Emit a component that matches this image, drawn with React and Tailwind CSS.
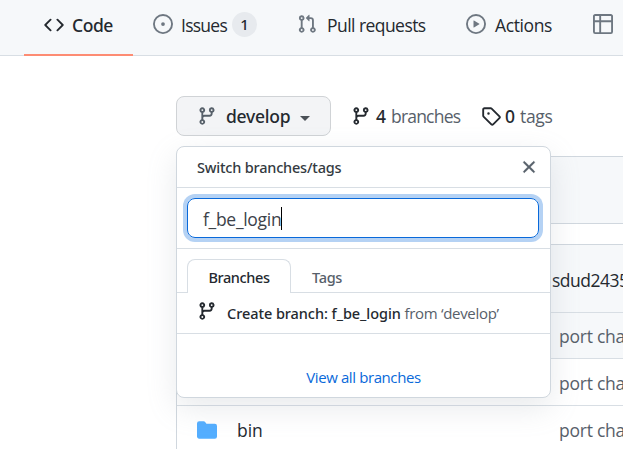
import React from "react";

const ICONS = {
  branch:
    "M11.75 2.5a.75.75 0 100 1.5.75.75 0 000-1.5zm-2.25.75a2.25 2.25 0 113 2.122V6A2.5 2.5 0 0110 8.5H6a1 1 0 00-1 1v1.128a2.251 2.251 0 11-1.5 0V5.372a2.25 2.25 0 111.5 0v1.836A2.492 2.492 0 016 7h4a1 1 0 001-1v-.628A2.25 2.25 0 019.5 3.25zM4.25 12a.75.75 0 100 1.5.75.75 0 000-1.5zM3.5 3.25a.75.75 0 111.5 0 .75.75 0 01-1.5 0z",
  code: "M4.72 3.22a.75.75 0 011.06 1.06L2.06 8l3.72 3.72a.75.75 0 11-1.06 1.06L.47 8.53a.75.75 0 010-1.06l4.25-4.25zm6.56 0a.75.75 0 10-1.06 1.06L13.94 8l-3.72 3.72a.75.75 0 101.06 1.06l4.25-4.25a.75.75 0 000-1.06l-4.25-4.25z",
  issue:
    "M8 9.5a1.5 1.5 0 100-3 1.5 1.5 0 000 3zM8 0a8 8 0 100 16A8 8 0 008 0zM1.5 8a6.5 6.5 0 1113 0 6.5 6.5 0 01-13 0z",
  pull: "M7.177 3.073L9.573.677A.25.25 0 0110 .854v4.792a.25.25 0 01-.427.177L7.177 3.427a.25.25 0 010-.354zM3.75 2.5a.75.75 0 100 1.5.75.75 0 000-1.5zm-2.25.75a2.25 2.25 0 113 2.122v5.256a2.251 2.251 0 11-1.5 0V5.372A2.25 2.25 0 011.5 3.25zM11 2.5h-1V4h1a1 1 0 011 1v5.628a2.251 2.251 0 101.5 0V5A2.5 2.5 0 0011 2.5zm1 10.25a.75.75 0 111.5 0 .75.75 0 01-1.5 0zM3.75 12a.75.75 0 100 1.5.75.75 0 000-1.5z",
  play: "M1.5 8a6.5 6.5 0 1113 0 6.5 6.5 0 01-13 0zM8 0a8 8 0 100 16A8 8 0 008 0zM6.379 5.227A.25.25 0 006 5.442v5.117a.25.25 0 00.379.214l4.264-2.559a.25.25 0 000-.428L6.379 5.227z",
  table:
    "M0 1.75C0 .784.784 0 1.75 0h12.5C15.216 0 16 .784 16 1.75v12.5A1.75 1.75 0 0114.25 16H1.75A1.75 1.75 0 010 14.25V1.75zM1.5 6.5v7.75c0 .138.112.25.25.25H5v-8H1.5zM5 5V1.5H1.75a.25.25 0 00-.25.25V5H5zm1.5 1.5v8h7.75a.25.25 0 00.25-.25V6.5h-8zm8-1.5V1.75a.25.25 0 00-.25-.25H6.5V5h8z",
  tag: "M2.5 7.775V2.75a.25.25 0 01.25-.25h5.025a.25.25 0 01.177.073l6.25 6.25a.25.25 0 010 .354l-5.025 5.025a.25.25 0 01-.354 0l-6.25-6.25a.25.25 0 01-.073-.177zm-1.5 0V2.75C1 1.784 1.784 1 2.75 1h5.025c.464 0 .91.184 1.238.513l6.25 6.25a1.75 1.75 0 010 2.474l-5.026 5.026a1.75 1.75 0 01-2.474 0l-6.25-6.25A1.75 1.75 0 011 7.775zM6 5a1 1 0 100 2 1 1 0 000-2z",
  folder:
    "M1.75 1A1.75 1.75 0 000 2.75v10.5C0 14.216.784 15 1.75 15h12.5A1.75 1.75 0 0016 13.25v-8.5A1.75 1.75 0 0014.25 3h-6.5a.25.25 0 01-.2-.1l-.9-1.2c-.33-.44-.85-.7-1.4-.7h-3.5z",
  x: "M3.72 3.72a.75.75 0 011.06 0L8 6.94l3.22-3.22a.75.75 0 111.06 1.06L9.06 8l3.22 3.22a.75.75 0 11-1.06 1.06L8 9.06l-3.22 3.22a.75.75 0 01-1.06-1.06L6.94 8 3.72 4.78a.75.75 0 010-1.06z",
};

function Icon({ name, className = "" }) {
  return (
    <svg viewBox="0 0 16 16" fill="currentColor" fillRule="evenodd" className={`size-5 shrink-0 ${className}`}>
      <path d={ICONS[name]} />
    </svg>
  );
}

function Nav() {
  return (
    <nav className="flex h-14 w-full items-stretch border-b border-[#d8dee4] bg-[#f6f8fa] pl-6">
      <div className="-mb-px flex w-[109px] shrink-0 items-center border-b-2 border-[#fd8c73] pb-[5px] pl-5">
        <Icon name="code" />
        <span className="ml-2 pt-px font-['Noto_Sans'] text-[17.5px] font-medium tracking-[-0.45px]">Code</span>
      </div>
      <div className="flex w-[144px] shrink-0 items-center pb-[7px] pl-5">
        <Icon name="issue" className="text-[#6e7781]" />
        <span className="ml-2 w-[51px] pt-px tracking-[-0.75px]">Issues</span>
        <span className="flex h-[25px] w-[25px] items-center justify-center rounded-full bg-[#e7eaee] font-['Noto_Sans'] text-[15px] font-medium">
          1
        </span>
      </div>
      <div className="flex w-[169px] shrink-0 items-center pb-[7px] pl-5">
        <Icon name="pull" className="text-[#6e7781]" />
        <span className="ml-[10px] whitespace-nowrap pt-px tracking-[-0.55px]">Pull requests</span>
      </div>
      <div className="flex w-[127px] shrink-0 items-center pb-[7px] pl-5">
        <Icon name="play" className="text-[#6e7781]" />
        <span className="ml-[9px] pt-px tracking-[-0.4px]">Actions</span>
      </div>
      <div className="flex w-[50px] shrink-0 items-center pb-[7px] pl-5">
        <Icon name="table" className="text-[#6e7781]" />
      </div>
    </nav>
  );
}

function BranchMenu() {
  return (
    <div className="absolute left-0 top-[50px] flex h-[252px] w-[375px] flex-col overflow-hidden rounded-[8px] border border-[#d0d7de] bg-white text-[15px] shadow-[0_10px_30px_rgba(140,149,159,0.2)]">
      <div className="flex h-[41px] shrink-0 items-center justify-between border-b border-[#d8dee4] pl-5 pr-[11px]">
        <span className="font-['Noto_Sans'] text-[14.5px] font-medium tracking-[-0.2px] text-[#343a41]">
          Switch branches/tags
        </span>
        <Icon name="x" className="stroke-current stroke-[0.3] text-[#57606a]" />
      </div>
      <div className="h-[61px] shrink-0 border-b border-[#d8dee4] px-[10px] pt-[10px]">
        <div className="flex h-10 w-[352px] items-center rounded-[8px] border border-[#0969da] pl-[15px] text-[17.5px] text-[#3c4249] shadow-[0_0_0_4px_rgba(9,105,218,0.3)]">
          <span className="pt-px tracking-[-0.3px]">f_be_login</span>
          <span className="h-[23px] w-px bg-black" />
        </div>
      </div>
      <div className="flex h-11 shrink-0 items-end border-b border-[#d8dee4] pl-[10px] font-['Noto_Sans'] font-medium">
        <div className="-mb-px flex h-[34px] w-[104px] items-center justify-center rounded-t-[8px] border border-b-0 border-[#d8dee4] bg-white">
          <span className="text-[14.5px] tracking-[-0.4px]">Branches</span>
        </div>
        <span className="ml-[21px] pb-[3px] text-[14.5px] tracking-[-0.3px] text-[#57606a]">Tags</span>
      </div>
      <div className="flex h-[41px] shrink-0 items-center border-b border-[#d8dee4] pl-5">
        <Icon name="branch" className="mb-1" />
        <span className="ml-[10px] whitespace-nowrap text-[#57606a]">
          <b className="font-['Noto_Sans'] text-[14.5px] font-medium tracking-[-0.06px] text-[#24292f]">
            Create branch: f_be_login
          </b>
          <span className="tracking-[-0.3px]"> from ‘develop’</span>
        </span>
      </div>
      <div className="flex grow items-end justify-center pb-2 text-[#0969da]">
        <span className="tracking-[-0.4px]">View all branches</span>
      </div>
    </div>
  );
}

function FileRow({ name, className }) {
  return (
    <div className={`flex items-center overflow-hidden border-t border-[#d8dee4] pl-5 ${className}`}>
      <Icon name="folder" className="text-[#54aeff]" />
      <span className="ml-5 w-[322px] shrink-0">{name}</span>
      <span className="whitespace-nowrap tracking-[-0.25px] text-[#57606a]">port cha</span>
    </div>
  );
}

export default function App() {
  return (
    <div className="h-[449px] w-[623px] overflow-hidden bg-white font-['Open_Sans','Noto_Sans',sans-serif] text-[17.5px] leading-6 text-[#24292f]">
      <Nav />
      <main className="relative ml-44 mt-10 w-[500px]">
        <div className="flex h-10 items-center">
          <button className="flex h-10 w-[155px] items-center rounded-[8px] border border-[#d0d3d6] bg-[#f3f4f6] pl-5">
            <Icon name="branch" className="text-[#57606a]" />
            <span className="ml-[9px] w-[74px] text-left font-['Noto_Sans'] font-medium tracking-[-0.25px]">
              develop
            </span>
            <span className="mt-1 border-x-[5px] border-t-[5px] border-x-transparent border-t-[#4b5157]" />
          </button>
          <Icon name="branch" className="ml-5" />
          <b className="ml-[5px] w-[15px] pb-px font-['Noto_Sans'] font-medium">4</b>
          <span className="w-[90px] pb-px tracking-[-0.8px] text-[#57606a]">branches</span>
          <Icon name="tag" />
          <b className="ml-1 w-[15px] pb-px font-['Noto_Sans'] font-medium">0</b>
          <span className="pb-px tracking-[-0.3px] text-[#57606a]">tags</span>
        </div>
        <section className="mt-5 h-[68px] rounded-[8px] border border-[#d0d7de] bg-[#f6f8fa]" />
        <section className="mt-5 h-[240px] rounded-[8px] border border-[#d0d7de]">
          <div className="flex h-[67px] items-center bg-[#f6f8fa] pl-[375px] pt-0.5 tracking-[-0.5px]">sdud2435</div>
          <FileRow name="" className="h-[46px] bg-[#f6f8fa] pt-px" />
          <FileRow name="" className="h-[47px] pt-0.5" />
          <FileRow name="bin" className="h-[47px] pt-px" />
        </section>
        <BranchMenu />
      </main>
    </div>
  );
}
